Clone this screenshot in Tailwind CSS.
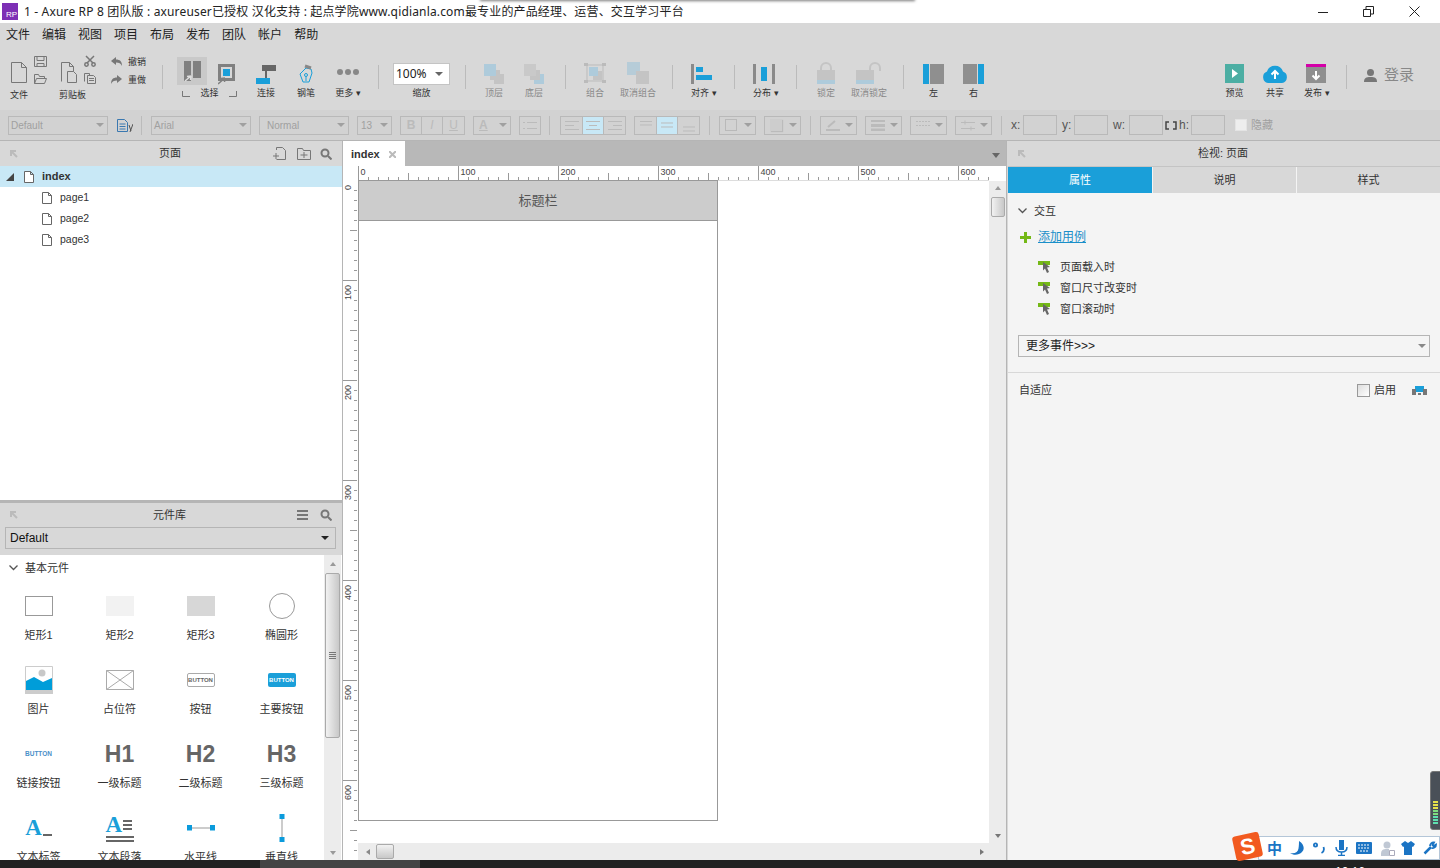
<!DOCTYPE html>
<html lang="zh-CN">
<head>
<meta charset="UTF-8">
<title>Axure RP 8</title>
<script src="https://cdn.jsdelivr.net/npm/@tailwindcss/browser@4"></script>
</head>
<body class="relative w-[1440px] h-[868px] overflow-hidden flex flex-col bg-white text-[#333] font-['Liberation_Sans','Noto_Sans_CJK_SC',sans-serif]">

<!-- Title bar -->
<header class="h-[23px] shrink-0 flex items-center bg-white relative">
  <div class="ml-[2px] w-[16px] h-[17px] bg-[#7d2fb5] flex items-end justify-end pr-[1px] text-[8px] leading-[10px] text-white">RP</div>
  <div class="ml-[6px] text-[12px] tracking-[0.16px] text-[#222] font-['Noto_Sans','Noto_Sans_CJK_SC',sans-serif] whitespace-nowrap">1 - Axure RP 8 团队版 : axureuser已授权 汉化支持 : 起点学院www.qidianla.com最专业的产品经理、运营、交互学习平台</div>
  <div class="ml-auto flex items-center text-[#222]">
    <svg class="mr-[35px]" width="10" height="10"><path d="M0 5.500h10" stroke="#222"/></svg>
    <svg class="mr-[35px]" width="11" height="11" fill="none" stroke="#222"><path d="M.5 3.500h7v7h-7zM3 3V.5h7.500V8H8"/></svg>
    <svg class="mr-[20px]" width="11" height="11" fill="none" stroke="#222"><path d="M.5.500l10 10M10.500.500l-10 10"/></svg>
  </div>
  <div class="absolute left-[480px] top-[-3px] w-[435px] h-[3px] shadow-[0_1px_3px_#777]"></div>
</header>

<!-- Menu -->
<nav class="h-[23px] shrink-0 bg-[#d8d8d8] flex items-center pl-[6px] gap-[12px] text-[12px] text-[#222]">
  <span>文件</span><span>编辑</span><span>视图</span><span>项目</span><span>布局</span><span>发布</span><span>团队</span><span>帐户</span><span>帮助</span>
</nav>

<!-- Toolbar -->
<div class="h-[64px] shrink-0 bg-[#d8d8d8] flex text-[9px] leading-[12px] text-[#333]">
  <div class="ml-[10px] w-[37px] flex flex-col">
    <div class="h-[38px] flex items-end gap-[6px]">
      <svg width="18" height="23" fill="none" stroke="#777"><path d="M1.500 1.500h10l5 5v15h-15zM11.500 1.500v5h5"/></svg>
      <div class="flex flex-col gap-[7px]">
        <svg width="13" height="11" fill="none" stroke="#777"><path d="M.5.500h12v10H.500zM3 .5v4h7v-4M3 10.500v-3h7v3"/></svg>
        <svg width="13" height="10" fill="none" stroke="#777"><path d="M.5 9.500v-9h4l1 2h5v2M.5 9.500l2-5h10l-2 5z"/></svg>
      </div>
    </div>
    <div class="mt-[5px]">文件</div>
  </div>
  <div class="ml-[13px] w-[37px] flex flex-col">
    <div class="h-[38px] flex items-end gap-[6px]">
      <svg width="18" height="23" fill="none" stroke="#777"><path d="M1.500 20.500v-19h8l4 4v5M9.500 1.500v4h4M7.500 10.500h6l3 3v8h-9z"/></svg>
      <div class="flex flex-col gap-[6px]">
        <svg width="12" height="12" fill="none" stroke="#777" stroke-width="1.500"><path d="M2 1l7 7M10 1L3 8"/><circle cx="2.500" cy="9.500" r="1.700"/><circle cx="9.500" cy="9.500" r="1.700"/></svg>
        <svg width="12" height="11" fill="none" stroke="#777"><path d="M.5 8.500v-8h5v2M3.500 2.500h6l2 2v6h-8zM5 5.500h5M5 7.500h5"/></svg>
      </div>
    </div>
    <div class="mt-[5px] -ml-[1px]">剪贴板</div>
  </div>
  <div class="ml-[14px] w-[35px] flex flex-col gap-[6px] pt-[10px]">
    <div class="flex items-center gap-[6px]"><svg width="11" height="10" fill="#777"><path d="M0 4l5-4v2.500c4 0 6 2 6 6.500-1-2.500-3-3.500-6-3.500V8z"/></svg><span>撤销</span></div>
    <div class="flex items-center gap-[6px]"><svg width="11" height="10" fill="#777"><path d="M11 4L6 0v2.500C2 2.500 0 4.500 0 9c1-2.500 3-3.500 6-3.500V8z"/></svg><span>重做</span></div>
  </div>
  <div class="ml-[16px] mt-[19px] w-px h-[24px] bg-[#bbb]"></div>

  <div class="ml-[14px] w-[60px] flex flex-col">
    <div class="h-[39px] flex items-start">
      <div class="mt-[11px] w-[30px] h-[28px] bg-[#c9c9c9] flex items-center justify-center">
        <svg width="17" height="21"><path d="M0 0h7v20H0zM9 0h8v17H9z" fill="#808080"/><path d="M1 20l6-5M7 15l-4 .5M7 15l-.5 4" stroke="#ddd" stroke-width="1.500"/></svg>
      </div>
      <svg class="mt-[18px] ml-[11px]" width="17" height="21"><path d="M1.500 1.500h14v14h-14z" fill="none" stroke="#808080" stroke-width="3"/><path d="M5 5h7v7H5z" fill="#1a9fd9"/><path d="M0 20l7-6M7 14l-4 .5M7 14l-.5 4" stroke="#808080" stroke-width="1.500"/></svg>
    </div>
    <div class="flex items-end justify-between pl-[5px]">
      <svg class="mb-[2px]" width="8" height="6" fill="none" stroke="#777"><path d="M.5 0v5.500H8"/></svg>
      <span class="mt-[2px]">选择</span>
      <svg class="mb-[2px]" width="8" height="6" fill="none" stroke="#777"><path d="M7.500 0v5.500H0"/></svg>
    </div>
  </div>
  <div class="ml-[19px] w-[20px] flex flex-col items-center">
    <div class="h-[38px] flex items-end"><svg width="20" height="19"><path d="M0 13h14v6H0z" fill="#1a9fd9"/><path d="M6 0h14v6H6z" fill="#666"/><path d="M10 6v7" stroke="#666" stroke-width="2"/></svg></div>
    <div class="mt-[3px] whitespace-nowrap">连接</div>
  </div>
  <div class="ml-[21px] w-[18px] flex flex-col items-center">
    <div class="h-[38px] flex items-end"><svg width="15" height="20" fill="none" stroke="#1a9fd9"><path d="M7 4l5 1 1 4-3 9H4L1 10z"/><circle cx="7" cy="11" r="1.500"/><path d="M7 12.500V17"/><path d="M6 2l6 2" stroke="#888" stroke-width="3"/></svg></div>
    <div class="mt-[3px] whitespace-nowrap">钢笔</div>
  </div>
  <div class="ml-[20px] w-[26px] flex flex-col items-center">
    <div class="h-[29px] flex items-end gap-[2px]"><i class="w-[6px] h-[6px] rounded-full bg-[#888]"></i><i class="w-[6px] h-[6px] rounded-full bg-[#888]"></i><i class="w-[6px] h-[6px] rounded-full bg-[#888]"></i></div>
    <div class="mt-[12px] whitespace-nowrap">更多 ▾</div>
  </div>
  <div class="ml-[17px] mt-[19px] w-px h-[24px] bg-[#bbb]"></div>
  <div class="ml-[14px] w-[57px] flex flex-col items-center">
    <div class="mt-[17px] w-[57px] h-[22px] bg-white border border-[#c4c4c4] flex items-center pl-[2px] text-[12px] text-[#222] font-['Noto_Sans',sans-serif]">100%<span class="ml-auto mr-[6px] border-x-[4px] border-t-[4px] border-x-transparent border-t-[#666]"></span></div>
    <div class="mt-[2px]">缩放</div>
  </div>
  <div class="ml-[15px] mt-[19px] w-px h-[24px] bg-[#bbb]"></div>

  <div class="ml-[18px] w-[20px] flex flex-col items-center text-[#888]">
    <div class="h-[38px] flex items-end"><svg width="20" height="20"><path d="M6 6h10v10H6zM10 10h10v10H10z" fill="#c4c4c4"/><path d="M0 0h12v12H0z" fill="#aecbdb"/></svg></div>
    <div class="mt-[3px] whitespace-nowrap">顶层</div>
  </div>
  <div class="ml-[20px] w-[20px] flex flex-col items-center text-[#888]">
    <div class="h-[38px] flex items-end"><svg width="20" height="20"><path d="M10 10h10v10H10z" fill="#aecbdb"/><path d="M6 6h10v10H6z" fill="#c4c4c4"/><path d="M0 0h12v12H0z" fill="#c9c9c9"/></svg></div>
    <div class="mt-[3px] whitespace-nowrap">底层</div>
  </div>
  <div class="ml-[21px] mt-[19px] w-px h-[24px] bg-[#bbb]"></div>
  <div class="ml-[18px] w-[22px] flex flex-col items-center text-[#888]">
    <div class="h-[38px] flex items-end"><svg width="22" height="22"><path d="M3 3h16v16H3z" fill="none" stroke="#bbb"/><path d="M0 1h4v3H0zM18 1h4v3h-4zM0 18h4v3H0zM18 18h4v3h-4z" fill="#bbb"/><path d="M9 9h9v9H9z" fill="#c4c4c4"/><path d="M5 5h9v9H5z" fill="#aecbdb"/></svg></div>
    <div class="mt-[3px] whitespace-nowrap">组合</div>
  </div>
  <div class="ml-[14px] w-[36px] flex flex-col items-center text-[#888]">
    <div class="h-[38px] flex items-end"><svg width="22" height="22"><path d="M0 0h13v13H0z" fill="#b6ccd8"/><path d="M9 9h13v13H9z" fill="#c4c4c4"/></svg></div>
    <div class="mt-[3px] whitespace-nowrap">取消组合</div>
  </div>
  <div class="ml-[16px] mt-[19px] w-px h-[24px] bg-[#bbb]"></div>
  <div class="ml-[18px] w-[26px] flex flex-col">
    <div class="h-[38px] flex items-end"><svg width="21" height="20"><path d="M0 0h3v20H0z" fill="#8a8a8a"/><path d="M5 3h7v5H5zM5 11h16v5H5z" fill="#1a9fd9"/></svg></div>
    <div class="mt-[3px] whitespace-nowrap">对齐 ▾</div>
  </div>
  <div class="ml-[17px] mt-[19px] w-px h-[24px] bg-[#bbb]"></div>
  <div class="ml-[18px] w-[26px] flex flex-col">
    <div class="h-[38px] flex items-end"><svg width="22" height="20"><path d="M0 0h3v20H0zM19 0h3v20h-3z" fill="#8a8a8a"/><path d="M8 3h6v14H8z" fill="#1a9fd9"/></svg></div>
    <div class="mt-[3px] whitespace-nowrap">分布 ▾</div>
  </div>
  <div class="ml-[17px] mt-[19px] w-px h-[24px] bg-[#bbb]"></div>
  <div class="ml-[20px] w-[18px] flex flex-col items-center text-[#888]">
    <div class="h-[38px] flex items-end"><svg width="18" height="22"><path d="M4 9V6a5 5 0 0110 0v3" fill="none" stroke="#c4c4c4" stroke-width="2"/><path d="M0 8h18v10H0z" fill="#c4c4c4"/><path d="M0 18h18v4H0z" fill="#aecbdb"/></svg></div>
    <div class="mt-[3px] whitespace-nowrap">锁定</div>
  </div>
  <div class="ml-[16px] w-[36px] flex flex-col items-center text-[#888]">
    <div class="h-[38px] flex items-end"><svg width="26" height="22"><path d="M14 9V6a5 5 0 0110 0v3" fill="none" stroke="#c4c4c4" stroke-width="2"/><path d="M0 8h18v10H0z" fill="#c4c4c4"/><path d="M0 18h18v4H0z" fill="#aecbdb"/></svg></div>
    <div class="mt-[3px] whitespace-nowrap">取消锁定</div>
  </div>
  <div class="ml-[16px] mt-[19px] w-px h-[24px] bg-[#bbb]"></div>
  <div class="ml-[19px] w-[21px] flex flex-col items-center">
    <div class="h-[38px] flex items-end"><svg width="21" height="20"><path d="M0 0h6v20H0z" fill="#1a9fd9"/><path d="M7 0h14v20H7z" fill="#8f8f8f"/></svg></div>
    <div class="mt-[3px]">左</div>
  </div>
  <div class="ml-[19px] w-[21px] flex flex-col items-center">
    <div class="h-[38px] flex items-end"><svg width="21" height="20"><path d="M0 0h14v20H0z" fill="#8f8f8f"/><path d="M15 0h6v20h-6z" fill="#1a9fd9"/></svg></div>
    <div class="mt-[3px]">右</div>
  </div>

  <div class="ml-[241px] w-[19px] flex flex-col items-center">
    <div class="h-[37px] flex items-end"><svg width="19" height="19"><path d="M0 0h19v19H0z" fill="#4caea3"/><path d="M7 5l6 4.500-6 4.500z" fill="#fff"/></svg></div>
    <div class="mt-[4px] whitespace-nowrap">预览</div>
  </div>
  <div class="ml-[18px] w-[26px] flex flex-col items-center">
    <div class="h-[37px] flex items-end"><svg width="26" height="19"><path d="M6 19a6 6 0 01-1-11.500 8.500 8.500 0 0116 0A6 6 0 0120 19z" fill="#1a9fd9"/><path d="M13 15V7M9.500 10.500L13 7l3.500 3.500" fill="none" stroke="#fff" stroke-width="2"/></svg></div>
    <div class="mt-[4px] whitespace-nowrap">共享</div>
  </div>
  <div class="ml-[16px] w-[26px] flex flex-col">
    <div class="h-[37px] flex items-end pl-[2px]"><svg width="20" height="19"><path d="M0 3h20v16H0z" fill="#8f8f8f"/><path d="M0 0h20v3H0z" fill="#d400a8"/><path d="M10 7v8M6.500 11.500L10 15l3.500-3.500" fill="none" stroke="#fff" stroke-width="2"/></svg></div>
    <div class="mt-[4px] whitespace-nowrap">发布 ▾</div>
  </div>
  <div class="ml-[16px] mt-[19px] w-px h-[24px] bg-[#bbb]"></div>
  <div class="ml-[17px] mt-[21px] h-[16px] flex items-center gap-[7px] text-[15px] text-[#888] whitespace-nowrap">
    <svg width="13" height="13" fill="#777"><circle cx="6.500" cy="3.500" r="3.500"/><path d="M0 13c0-4 2-5 6.500-5s6.500 1 6.500 5z"/></svg>登录
  </div>
</div>

<!-- Format bar -->
<div class="h-[30px] shrink-0 bg-[#d2d2d2] flex items-center text-[10px] text-[#a0a0a0]">
  <div class="ml-[8px] w-[100px] h-[19px] border border-[#b9b9b9] flex items-center pl-[2px]">Default<span class="ml-auto mr-[3px] border-x-[4px] border-t-[4px] border-x-transparent border-t-[#a0a0a0]"></span></div>
  <svg class="ml-[9px]" width="16" height="13" fill="none" stroke="#3a78b0"><path d="M.5.500h7l3 3v9h-10zM2.500 5h6M2.500 7.500h6M2.500 10h6"/><path d="M12 6l2 6M16 5l-3 8" stroke="#555"/></svg>
  <div class="ml-[8px] w-px h-[19px] bg-[#bbb]"></div>
  <div class="ml-[9px] w-[100px] h-[19px] border border-[#b9b9b9] flex items-center pl-[2px]">Arial<span class="ml-auto mr-[3px] border-x-[4px] border-t-[4px] border-x-transparent border-t-[#a0a0a0]"></span></div>
  <div class="ml-[8px] w-[90px] h-[19px] border border-[#b9b9b9] flex items-center pl-[7px]">Normal<span class="ml-auto mr-[3px] border-x-[4px] border-t-[4px] border-x-transparent border-t-[#a0a0a0]"></span></div>
  <div class="ml-[8px] w-[35px] h-[19px] border border-[#b9b9b9] flex items-center pl-[3px]">13<span class="ml-auto mr-[3px] border-x-[4px] border-t-[4px] border-x-transparent border-t-[#a0a0a0]"></span></div>
  <div class="ml-[8px] flex h-[19px] border border-[#b9b9b9] divide-x divide-[#b9b9b9] text-[12px] text-[#bbb] text-center leading-[17px]">
    <span class="w-[21px] font-bold">B</span><span class="w-[21px] italic">I</span><span class="w-[21px] underline">U</span>
  </div>
  <div class="ml-[8px] w-[38px] h-[19px] border border-[#b9b9b9] flex items-center pl-[5px] text-[12px] text-[#bbb] underline font-bold">A<span class="ml-auto mr-[3px] border-x-[4px] border-t-[4px] border-x-transparent border-t-[#a0a0a0]"></span></div>
  <div class="ml-[8px] w-[22px] h-[19px] border border-[#b9b9b9] flex items-center justify-center"><svg width="14" height="9" stroke="#bbb"><path d="M0 1.500h2M4 1.500h10M0 7.500h2M4 7.500h10"/></svg></div>
  <div class="ml-[8px] w-px h-[19px] bg-[#bbb]"></div>
  <div class="ml-[10px] flex h-[19px] border border-[#b9b9b9] divide-x divide-[#b9b9b9]">
    <span class="w-[22px] flex items-center justify-center"><svg width="14" height="11" stroke="#bbb"><path d="M0 1.500h14M0 5.500h9M0 9.500h14"/></svg></span>
    <span class="w-[21px] bg-[#c8e8f6] flex items-center justify-center"><svg width="14" height="11" stroke="#bbb"><path d="M0 1.500h14M3 5.500h8M0 9.500h14"/></svg></span>
    <span class="w-[21px] flex items-center justify-center"><svg width="14" height="11" stroke="#bbb"><path d="M0 1.500h14M5 5.500h9M0 9.500h14"/></svg></span>
  </div>
  <div class="ml-[8px] flex h-[19px] border border-[#b9b9b9] divide-x divide-[#b9b9b9]">
    <span class="w-[22px] flex justify-center pt-[3px]"><svg width="12" height="6" stroke="#bbb"><path d="M0 1.500h12M0 5h12"/></svg></span>
    <span class="w-[21px] bg-[#c8e8f6] flex items-center justify-center"><svg width="12" height="6" stroke="#bbb"><path d="M0 1h12M0 5h12"/></svg></span>
    <span class="w-[21px] flex items-end justify-center pb-[2px]"><svg width="12" height="6" stroke="#bbb"><path d="M0 1h12M0 5h12"/></svg></span>
  </div>
  <div class="ml-[9px] w-px h-[19px] bg-[#bbb]"></div>
  <div class="ml-[9px] w-[37px] h-[19px] border border-[#b9b9b9] flex items-center pl-[5px]"><i class="w-[12px] h-[12px] border border-[#b9b9b9]"></i><span class="ml-auto mr-[3px] border-x-[4px] border-t-[4px] border-x-transparent border-t-[#a0a0a0]"></span></div>
  <div class="ml-[8px] w-[37px] h-[19px] border border-[#b9b9b9] flex items-center pl-[5px]"><i class="w-[12px] h-[12px] bg-[#cdcdcd] shadow-[1px_1px_1px_#bbb]"></i><span class="ml-auto mr-[3px] border-x-[4px] border-t-[4px] border-x-transparent border-t-[#a0a0a0]"></span></div>
  <div class="ml-[9px] w-px h-[19px] bg-[#bbb]"></div>
  <div class="ml-[9px] w-[37px] h-[19px] border border-[#b9b9b9] flex items-center pl-[5px]"><svg width="14" height="12" stroke="#bbb" stroke-width="2"><path d="M2 8l7-6M0 11h14"/></svg><span class="ml-auto mr-[3px] border-x-[4px] border-t-[4px] border-x-transparent border-t-[#a0a0a0]"></span></div>
  <div class="ml-[8px] w-[37px] h-[19px] border border-[#b9b9b9] flex items-center pl-[5px]"><svg width="14" height="11" fill="#bbb"><path d="M0 0h14v2H0zM0 4h14v3H0zM0 8.500h14V11H0z"/></svg><span class="ml-auto mr-[3px] border-x-[4px] border-t-[4px] border-x-transparent border-t-[#a0a0a0]"></span></div>
  <div class="ml-[8px] w-[37px] h-[19px] border border-[#b9b9b9] flex items-center pl-[5px]"><svg width="14" height="11" stroke="#bbb" stroke-dasharray="2 1"><path d="M0 1.500h14M0 5.500h14"/></svg><span class="ml-auto mr-[3px] border-x-[4px] border-t-[4px] border-x-transparent border-t-[#a0a0a0]"></span></div>
  <div class="ml-[8px] w-[37px] h-[19px] border border-[#b9b9b9] flex items-center pl-[5px]"><svg width="14" height="11" stroke="#bbb"><path d="M0 2.500h14M0 8.500h14M4 .5v4M10 6.500v4"/></svg><span class="ml-auto mr-[3px] border-x-[4px] border-t-[4px] border-x-transparent border-t-[#a0a0a0]"></span></div>
  <div class="ml-[9px] w-px h-[19px] bg-[#bbb]"></div>
  <span class="ml-[9px] w-[12px] text-[#555] text-[12px]">x:</span>
  <i class="w-[34px] h-[20px] border border-[#b9b9b9]"></i>
  <span class="ml-[5px] w-[12px] text-[#555] text-[12px]">y:</span>
  <i class="w-[34px] h-[20px] border border-[#b9b9b9]"></i>
  <span class="ml-[5px] w-[16px] text-[#555] text-[12px]">w:</span>
  <i class="w-[34px] h-[20px] border border-[#b9b9b9]"></i>
  <svg class="ml-[2px]" width="12" height="9" fill="none" stroke="#444" stroke-width="1.500"><path d="M4 1H1v7h3M8 1h3v7H8"/></svg>
  <span class="ml-[2px] w-[12px] text-[#555] text-[12px]">h:</span>
  <i class="w-[34px] h-[20px] border border-[#b9b9b9]"></i>
  <i class="ml-[10px] w-[12px] h-[12px] bg-[#eee] border border-[#e4e4e4]"></i>
  <span class="ml-[4px] text-[11px]">隐藏</span>
</div>

<!-- Main -->
<div class="h-[720px] shrink-0 flex border-t border-[#b5b5b5]">

  <!-- Left column -->
  <aside class="w-[342px] shrink-0 flex flex-col">
    <div class="h-[25px] shrink-0 bg-[#d8d8d8] flex items-center text-[11px] text-[#333]">
      <svg class="ml-[10px]" width="8" height="8" stroke="#bbb" stroke-width="2" fill="none"><path d="M7 7L1 1M1 6V1h5"/></svg>
      <span class="ml-[141px]">页面</span>
      <svg class="ml-[92px]" width="13" height="13" fill="none" stroke="#777"><path d="M3.500 3V.5h6l3 3v9h-9M0 9h6M3 6v6"/></svg>
      <svg class="ml-[11px]" width="14" height="12" fill="none" stroke="#777"><path d="M.5 11.500v-11h5l1 2h7v9zM3.500 7h7M7 4v6"/></svg>
      <svg class="ml-[9px]" width="12" height="12" fill="none" stroke="#777" stroke-width="2"><circle cx="5" cy="5" r="3.500"/><path d="M8 8l3.500 3.500"/></svg>
    </div>
    <div class="h-[334px] shrink-0 bg-white text-[11px] text-[#333]">
      <div class="h-[21px] bg-[#c8e8f6] flex items-center font-bold">
        <svg class="ml-[6px]" width="8" height="8" fill="#444"><path d="M8 0v8H0z"/></svg>
        <svg class="ml-[10px]" width="10" height="12" fill="#fff" stroke="#666"><path d="M.5.500h6l3 3v8h-9zM6.500.500v3h3"/></svg>
        <span class="ml-[8px]">index</span>
      </div>
      <div class="h-[21px] flex items-center pl-[42px] gap-[8px] text-[10.500px]"><svg width="10" height="12" fill="#fff" stroke="#666"><path d="M.5.500h6l3 3v8h-9zM6.500.500v3h3"/></svg>page1</div>
      <div class="h-[21px] flex items-center pl-[42px] gap-[8px] text-[10.500px]"><svg width="10" height="12" fill="#fff" stroke="#666"><path d="M.5.500h6l3 3v8h-9zM6.500.500v3h3"/></svg>page2</div>
      <div class="h-[21px] flex items-center pl-[42px] gap-[8px] text-[10.500px]"><svg width="10" height="12" fill="#fff" stroke="#666"><path d="M.5.500h6l3 3v8h-9zM6.500.500v3h3"/></svg>page3</div>
    </div>
    <div class="h-[3px] shrink-0 bg-[#b5b5b5]"></div>
    <div class="h-[52px] shrink-0 bg-[#d8d8d8] flex flex-col">
      <div class="h-[24px] flex items-center text-[11px]">
        <svg class="ml-[10px]" width="8" height="8" stroke="#bbb" stroke-width="2" fill="none"><path d="M7 7L1 1M1 6V1h5"/></svg>
        <span class="ml-[135px]">元件库</span>
        <svg class="ml-[111px]" width="11" height="10" fill="#777"><path d="M0 0h11v2H0zM0 4h11v2H0zM0 8h11v2H0z"/></svg>
        <svg class="ml-[12px]" width="12" height="12" fill="none" stroke="#777" stroke-width="2"><circle cx="5" cy="5" r="3.500"/><path d="M8 8l3.500 3.500"/></svg>
      </div>
      <div class="mx-[5px] w-[331px] h-[22px] border border-[#b5b5b5] flex items-center pl-[4px] text-[12px] text-[#111]">Default<span class="ml-auto mr-[6px] border-x-[4px] border-t-[4px] border-x-transparent border-t-[#222]"></span></div>
    </div>
    <div class="h-[305px] shrink-0 bg-white flex overflow-hidden">
      <div class="w-[325px] shrink-0 text-[11px] text-[#333]">
        <div class="h-[26px] flex items-center pl-[9px] gap-[7px]">
          <svg width="9" height="6" fill="none" stroke="#555" stroke-width="1.300"><path d="M.5.500l4 4 4-4"/></svg><span>基本元件</span>
        </div>
        <div class="grid grid-cols-[81px_81px_81px_81px] auto-rows-[74px] mt-[13px] -ml-[2px]">
          <div class="flex flex-col items-center"><div class="h-[26px] mt-[-1px] w-full flex items-center justify-center"><i class="w-[28px] h-[20px] border border-[#999]"></i></div><span class="mt-[8px]">矩形1</span></div>
          <div class="flex flex-col items-center"><div class="h-[26px] mt-[-1px] w-full flex items-center justify-center"><i class="w-[28px] h-[20px] bg-[#f2f2f2]"></i></div><span class="mt-[8px]">矩形2</span></div>
          <div class="flex flex-col items-center"><div class="h-[26px] mt-[-1px] w-full flex items-center justify-center"><i class="w-[28px] h-[20px] bg-[#d7d7d7]"></i></div><span class="mt-[8px]">矩形3</span></div>
          <div class="flex flex-col items-center"><div class="h-[26px] mt-[-1px] w-full flex items-center justify-center"><i class="w-[26px] h-[26px] rounded-full border border-[#999]"></i></div><span class="mt-[8px]">椭圆形</span></div>

          <div class="flex flex-col items-center"><div class="h-[28px] mt-[-2px] w-full flex items-center justify-center"><svg width="28" height="28"><path d="M.5.500h27v27H.5z" fill="#fff" stroke="#ccc"/><path d="M0 24h28v4H0z" fill="#ccc"/><circle cx="17" cy="7" r="3.500" fill="#c8c8c8"/><path d="M1 15l8-4 9 5 9-4v12H1z" fill="#009dd9"/></svg></div><span class="mt-[7px]">图片</span></div>
          <div class="flex flex-col items-center"><div class="h-[26px] mt-[-1px] w-full flex items-center justify-center"><svg width="28" height="20" fill="none" stroke="#aaa"><path d="M.5.500h27v19H.5zM.5.500l27 19M27.500.500l-27 19"/></svg></div><span class="mt-[8px]">占位符</span></div>
          <div class="flex flex-col items-center"><div class="h-[26px] mt-[-1px] w-full flex items-center justify-center"><span class="w-[28px] h-[14px] rounded-[2px] border border-[#aaa] text-[6px] leading-[12px] text-center text-[#666] font-bold">BUTTON</span></div><span class="mt-[8px]">按钮</span></div>
          <div class="flex flex-col items-center"><div class="h-[26px] mt-[-1px] w-full flex items-center justify-center"><span class="w-[28px] h-[14px] rounded-[2px] bg-[#1a9fd9] text-[6px] leading-[14px] text-center text-white font-bold">BUTTON</span></div><span class="mt-[8px]">主要按钮</span></div>

          <div class="flex flex-col items-center"><div class="h-[26px] mt-[-1px] w-full flex items-center justify-center"><span class="text-[6.500px] text-[#4a8fc9] font-bold">BUTTON</span></div><span class="mt-[8px]">链接按钮</span></div>
          <div class="flex flex-col items-center"><div class="h-[26px] mt-[-1px] w-full flex items-center justify-center text-[23px] font-bold text-[#666]">H1</div><span class="mt-[8px]">一级标题</span></div>
          <div class="flex flex-col items-center"><div class="h-[26px] mt-[-1px] w-full flex items-center justify-center text-[23px] font-bold text-[#666]">H2</div><span class="mt-[8px]">二级标题</span></div>
          <div class="flex flex-col items-center"><div class="h-[26px] mt-[-1px] w-full flex items-center justify-center text-[23px] font-bold text-[#666]">H3</div><span class="mt-[8px]">三级标题</span></div>

          <div class="flex flex-col items-center"><div class="h-[28px] mt-[-2px] w-full flex items-center justify-center gap-[1px] font-['Liberation_Serif',serif] text-[23px] leading-[28px] font-bold text-[#1a9fd9]">A<i class="mt-[14px] w-[9px] h-[2px] bg-[#666]"></i></div><span class="mt-[7px]">文本标签</span></div>
          <div class="flex flex-col items-center"><div class="h-[28px] mt-[-2px] w-full flex items-center justify-center font-['Liberation_Serif',serif] text-[23px] leading-[22px] font-bold text-[#1a9fd9]"><div class="flex flex-col w-[28px]"><div class="flex h-[20px] items-center">A<div class="ml-[1px] flex flex-col gap-[2px]"><i class="w-[9px] h-[2px] bg-[#666]"></i><i class="w-[9px] h-[2px] bg-[#666]"></i><i class="w-[9px] h-[2px] bg-[#666]"></i></div></div><i class="mt-[1px] w-[28px] h-[2px] bg-[#666]"></i><i class="mt-[2px] w-[28px] h-[2px] bg-[#666]"></i></div></div><span class="mt-[7px]">文本段落</span></div>
          <div class="flex flex-col items-center"><div class="h-[26px] mt-[-1px] w-full flex items-center justify-center"><svg width="28" height="6"><path d="M2 3h24" stroke="#999"/><path d="M0 0h5v5.500H0zM23 0h5v5.500h-5z" fill="#0b9bdc"/></svg></div><span class="mt-[8px]">水平线</span></div>
          <div class="flex flex-col items-center"><div class="h-[26px] mt-[-1px] w-full flex items-center justify-center"><svg width="6" height="28"><path d="M3 2v24" stroke="#999"/><path d="M.5 0H5.500v5H.5zM.5 23H5.500v5H.5z" fill="#0b9bdc"/></svg></div><span class="mt-[8px]">垂直线</span></div>
        </div>
      </div>
      <div class="w-[17px] ml-[-1px] bg-[#ececec] flex flex-col items-center">
        <span class="mt-[7px] border-x-[3px] border-b-[4px] border-x-transparent border-b-[#999]"></span>
        <div class="mt-[7px] w-[15px] h-[165px] rounded-[2px] border border-[#aaa] bg-gradient-to-r from-[#f2f2f2] to-[#c8c8c8] flex items-center justify-center"><svg width="7" height="7" stroke="#777"><path d="M0 .5h7M0 2.500h7M0 4.500h7M0 6.500h7"/></svg></div>
        <span class="mt-auto mb-[5px] border-x-[3px] border-t-[4px] border-x-transparent border-t-[#999]"></span>
      </div>
    </div>
  </aside>

  <!-- Center column -->
  <main class="w-[664px] shrink-0 flex flex-col border-l border-[#b5b5b5]">
    <div class="h-[25px] shrink-0 bg-[#b8b8b8] flex">
      <div class="w-[62px] h-full bg-white flex items-center text-[11px] font-bold pl-[8px] pt-[1px] text-[#333]">index<svg class="ml-[9px]" width="7" height="7" stroke="#bbb" stroke-width="2"><path d="M0 0l7 7M7 0L0 7"/></svg></div>
      <span class="ml-auto mr-[6px] mt-[12px] h-0 border-x-[4px] border-t-[5px] border-x-transparent border-t-[#666]"></span>
    </div>
    <div class="relative flex-1 bg-white overflow-hidden">
      <svg id="hruler" class="absolute left-[15px] top-0" width="631" height="15"></svg>
      <svg id="vruler" class="absolute left-0 top-[15px]" width="15" height="679"></svg>
      <div class="absolute left-[15px] top-[14px] w-[360px] h-[641px] border border-[#999] bg-white">
        <div class="h-[40px] bg-[#cccccc] border-b border-[#999] flex items-center justify-center text-[13px] text-[#555]">标题栏</div>
      </div>
      <!-- vertical scrollbar -->
      <div class="absolute right-0 top-[15px] w-[17px] h-[662px] bg-[#ececec] flex flex-col items-center">
        <span class="mt-[5px] border-x-[3px] border-b-[4px] border-x-transparent border-b-[#999]"></span>
        <div class="mt-[7px] w-[14px] h-[20px] rounded-[2px] border border-[#aaa] bg-gradient-to-r from-[#f2f2f2] to-[#c8c8c8]"></div>
        <span class="mt-auto mb-[5px] border-x-[3px] border-t-[4px] border-x-transparent border-t-[#777]"></span>
      </div>
      <!-- horizontal scrollbar -->
      <div class="absolute left-[15px] right-0 bottom-0 h-[17px] bg-[#ececec] flex items-center">
        <span class="ml-[8px] border-y-[3px] border-r-[4px] border-y-transparent border-r-[#888]"></span>
        <div class="ml-[6px] w-[18px] h-[15px] rounded-[2px] border border-[#aaa] bg-gradient-to-b from-[#f2f2f2] to-[#c8c8c8]"></div>
        <span class="ml-[586px] border-y-[3px] border-l-[4px] border-y-transparent border-l-[#777]"></span>
      </div>
    </div>
  </main>
  <div class="w-[1px] shrink-0 bg-[#b5b5b5]"></div>
  <div class="w-[1px] shrink-0 bg-[#d8d8d8]"></div>

  <!-- Right column -->
  <aside class="flex-1 flex flex-col bg-[#f4f4f4] text-[11px] text-[#333]">
    <div class="h-[26px] shrink-0 bg-[#d8d8d8] flex items-center border-b border-[#c4c4c4]">
      <svg class="ml-[10px]" width="8" height="8" stroke="#bbb" stroke-width="2" fill="none"><path d="M7 7L1 1M1 6V1h5"/></svg>
      <span class="ml-[172px]">检视: 页面</span>
    </div>
    <div class="h-[26px] shrink-0 flex text-center leading-[26px]">
      <div class="w-[144px] bg-[#1a9fd9] text-white">属性</div>
      <div class="ml-px w-[143px] bg-[#d8d8d8]">说明</div>
      <div class="ml-px flex-1 bg-[#d8d8d8]">样式</div>
    </div>
    <div class="h-[180px] shrink-0 border-b border-[#d8d8d8] pt-[10px]">
      <div class="h-[16px] flex items-center pl-[10px] gap-[7px]"><svg width="9" height="6" fill="none" stroke="#555" stroke-width="1.300"><path d="M.5.500l4 4 4-4"/></svg><span>交互</span></div>
      <div class="mt-[10px] h-[16px] flex items-center pl-[12px] gap-[7px]">
        <svg width="11" height="11" fill="#74b816"><path d="M4 0h3v4h4v3H7v4H4V7H0V4h4z"/></svg><span class="underline text-[#1a8fc9] text-[12px]">添加用例</span>
      </div>
      <div class="mt-[12px] h-[21px] flex items-center pl-[30px] gap-[10px]"><svg width="12" height="13"><path d="M0 0h12v4H0z" fill="#74b816"/><path d="M5 1l7 5-3 .5L11 11l-2 1-2-4.500-2 2z" fill="#666"/></svg><span>页面载入时</span></div>
      <div class="h-[21px] flex items-center pl-[30px] gap-[10px]"><svg width="12" height="13"><path d="M0 0h12v4H0z" fill="#74b816"/><path d="M5 1l7 5-3 .5L11 11l-2 1-2-4.500-2 2z" fill="#666"/></svg><span>窗口尺寸改变时</span></div>
      <div class="h-[21px] flex items-center pl-[30px] gap-[10px]"><svg width="12" height="13"><path d="M0 0h12v4H0z" fill="#74b816"/><path d="M5 1l7 5-3 .5L11 11l-2 1-2-4.500-2 2z" fill="#666"/></svg><span>窗口滚动时</span></div>
      <div class="mt-[15px] ml-[10px] w-[412px] h-[22px] border border-[#b5b5b5] flex items-center pl-[7px] text-[12px] text-[#222]">更多事件&gt;&gt;&gt;<span class="ml-auto mr-[3px] border-x-[4px] border-t-[4px] border-x-transparent border-t-[#888]"></span></div>
    </div>
    <div class="h-[35px] shrink-0 flex items-center pl-[11px]">
      <span>自适应</span>
      <i class="ml-[305px] w-[13px] h-[13px] border border-[#999] bg-gradient-to-br from-[#ddd] to-white"></i>
      <span class="ml-[4px]">启用</span>
      <svg class="ml-[16px]" width="15" height="9"><path d="M3 0h9v6H3z" fill="#1a9fd9"/><path d="M0 3h4v6H0zM11 3h4v6h-4zM6 7h3v2H6z" fill="#777"/></svg>
    </div>
  </aside>
</div>

<!-- Taskbar -->
<footer class="h-[8px] shrink-0 bg-[#222] flex relative overflow-hidden">
  <div class="ml-[260px] w-[160px] h-full bg-[#444]"></div>
  <span class="absolute left-[1335px] top-[5px] text-[12px] leading-[14px] text-white">10:16</span>
</footer>

<!-- Volume meter widget -->
<div class="absolute left-[1430px] top-[771px] w-[12px] h-[59px] rounded-l-[3px] bg-[#4a5058] border border-[#777] flex flex-col justify-end pb-[5px] pl-[2px] gap-px">
  <i class="w-[5px] h-[2px] bg-[#e6e04a]"></i><i class="w-[5px] h-[2px] bg-[#e6e04a]"></i><i class="w-[5px] h-[2px] bg-[#e6e04a]"></i>
  <i class="w-[5px] h-[2px] bg-[#7fdc7f]"></i><i class="w-[5px] h-[2px] bg-[#7fdc7f]"></i><i class="w-[5px] h-[2px] bg-[#5fe0b0]"></i><i class="w-[5px] h-[2px] bg-[#5fe0b0]"></i><i class="w-[5px] h-[2px] bg-[#5fe0b0]"></i>
</div>

<!-- IME bar -->
<div class="absolute left-[1258px] top-[836px] w-[182px] h-[24px] bg-white border border-[#b4c6d8] flex items-center pl-[8px] text-[#1b74c4]">
  <span class="text-[15px] leading-[15px] font-bold">中</span>
  <svg class="ml-[8px]" width="14" height="14" fill="#1b74c4"><path d="M9 0c5 3 6 8 3 11s-8 4-12 1c5 1 8-1 8.500-4.500S9 2 9 0z"/></svg>
  <svg class="ml-[9px]" width="12" height="12" fill="none" stroke="#1b74c4" stroke-width="1.800"><circle cx="2.500" cy="3" r="1.600"/><path d="M10.500 5c1 3 0 5-2 6"/></svg>
  <svg class="ml-[10px]" width="13" height="16" fill="#1b74c4"><path d="M4 0h5v10H4z"/><path d="M1 7c0 4 2 5 5.500 5S12 11 12 7M6.500 12v3M3 15.500h7" fill="none" stroke="#1b74c4" stroke-width="1.500"/></svg>
  <svg class="ml-[8px]" width="16" height="12"><path d="M0 1a1 1 0 011-1h14a1 1 0 011 1v10a1 1 0 01-1 1H1a1 1 0 01-1-1z" fill="#1b74c4"/><path d="M2 3h12M2 6h12M4 9h8" stroke="#fff" stroke-dasharray="2 1"/></svg>
  <svg class="ml-[8px]" width="15" height="15"><circle cx="7" cy="4" r="3.500" fill="#c0c8d4"/><path d="M1 13c0-4 2-5 6-5h2v7H1z" fill="#c0c8d4"/><path d="M9.500 9.500h5v5h-5z" fill="#fff" stroke="#aab"/></svg>
  <svg class="ml-[6px]" width="14" height="14" fill="#1b74c4"><path d="M4 0l3 2 3-2 4 3-2 3-1-.5V14H3V5.500L2 6 0 3z"/></svg>
  <svg class="ml-[8px]" width="14" height="14" fill="none" stroke="#1b74c4" stroke-width="2.500"><path d="M1.500 12.500L8 6"/><path d="M7 5a3.500 3.500 0 014-3.500L9.500 4l1 1L13 3.500A3.500 3.500 0 018.500 7" stroke-width="1.800"/></svg>
</div>
<div class="absolute left-[1234px] top-[834px] w-[27px] h-[25px] bg-[#f25a1f] rounded-[3px] -rotate-12 flex items-center justify-center text-white text-[22px] leading-[25px] font-bold">S</div>

<script>
  // rulers
  const ns = "http://www.w3.org/2000/svg";
  function add(svg, tag, attrs, text) {
    const el = document.createElementNS(ns, tag);
    for (const k in attrs) el.setAttribute(k, attrs[k]);
    if (text !== undefined) el.textContent = text;
    svg.appendChild(el);
  }
  const h = document.getElementById("hruler");
  for (let i = 0; i <= 63; i++) {
    const x = i * 10 + 0.5;
    const len = i % 10 === 0 ? 14 : (i % 5 === 0 ? 7 : 3);
    add(h, "path", { d: `M${x} 14V${14 - len}`, stroke: "#999" });
    if (i % 10 === 0) add(h, "text", { x: x + 2, y: 9, "font-size": 9, fill: "#444", "font-family": "Liberation Sans" }, i * 10);
  }
  const v = document.getElementById("vruler");
  for (let i = 0; i <= 67; i++) {
    const y = i * 10 - 0.5;
    const len = i % 10 === 0 ? 14 : (i % 5 === 0 ? 7 : 3);
    add(v, "path", { d: `M14 ${y}H${14 - len}`, stroke: "#999" });
    if (i % 10 === 0) add(v, "text", { transform: `translate(8 ${y + (i === 0 ? 7 : 12)}) rotate(-90)`, "text-anchor": "middle", "font-size": 9, fill: "#444", "font-family": "Liberation Sans" }, i * 10);
  }
  add(h, "path", { d: "M0 14.500H631", stroke: "#ddd" });
</script>
</body>
</html>
